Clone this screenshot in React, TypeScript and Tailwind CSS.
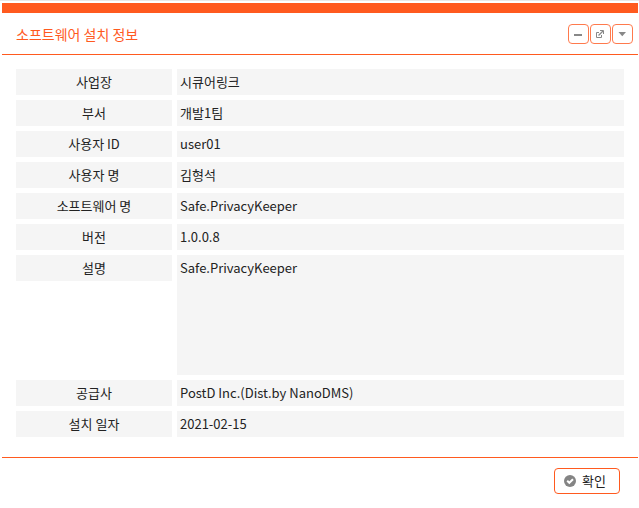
import React from "react";

type Field = { label: string; value: string; tall?: boolean };

const fields: Field[] = [
  { label: "사업장", value: "시큐어링크" },
  { label: "부서", value: "개발1팀" },
  { label: "사용자 ID", value: "user01" },
  { label: "사용자 명", value: "김형석" },
  { label: "소프트웨어 명", value: "Safe.PrivacyKeeper" },
  { label: "버전", value: "1.0.0.8" },
  { label: "설명", value: "Safe.PrivacyKeeper", tall: true },
  { label: "공급사", value: "PostD Inc.(Dist.by NanoDMS)" },
  { label: "설치 일자", value: "2021-02-15" },
];

function ToolButton({ label, children }: { label: string; children: React.ReactNode }) {
  return (
    <button
      type="button"
      aria-label={label}
      className="flex h-5 w-[21px] items-center rounded border border-[#ff7a4d] bg-white pl-[5px] text-[#888888]"
    >
      {children}
    </button>
  );
}

function MinimizeIcon() {
  return (
    <svg width="8" height="8" viewBox="0 0 8 8" shapeRendering="crispEdges" aria-hidden="true">
      <rect x="0" y="4" width="8" height="2" fill="currentColor" />
    </svg>
  );
}

function PopOutIcon() {
  return (
    <svg width="8" height="8" viewBox="0 0 8 8" fill="none" stroke="currentColor" aria-hidden="true">
      <path d="M3 2.5H.5V7.5H5.5V5" />
      <path d="M2.5 5.5L7 1" strokeWidth="1.2" />
      <path d="M4 .5H7.5V4" />
    </svg>
  );
}

function CaretIcon() {
  return (
    <svg width="8" height="8" viewBox="0 0 8 8" aria-hidden="true">
      <path d="M.5 2H8L4.25 6.3Z" fill="currentColor" />
    </svg>
  );
}

function CheckIcon() {
  return (
    <svg width="12" height="12" viewBox="0 0 12 12" fill="none" aria-hidden="true">
      <circle cx="6" cy="6" r="6" fill="#848484" />
      <path d="M3.2 5.8L5.3 7.8L9 4.2" stroke="white" strokeWidth="2" />
    </svg>
  );
}

export default function App() {
  return (
    <main className="border-t border-[#e8e8e8] bg-white pt-0.5 font-['Noto_Sans_CJK_KR',sans-serif] text-[13px] leading-[26px] text-[#222222]">
      <div className="mr-px ml-0.5">
        <header className="flex items-start justify-between border-t-10 border-b border-[#ff5a1f] pt-[11px] pr-[5px] pb-[9px] pl-3.5">
          <h1 className="text-sm leading-[21px] text-[#ff5a1f]">소프트웨어 설치 정보</h1>
          <div className="flex gap-px">
            <ToolButton label="최소화">
              <MinimizeIcon />
            </ToolButton>
            <ToolButton label="새 창">
              <PopOutIcon />
            </ToolButton>
            <ToolButton label="메뉴">
              <CaretIcon />
            </ToolButton>
          </div>
        </header>

        <dl className="flex flex-col gap-[5px] pt-3.5 pr-3.5 pb-5 pl-3.5">
          {fields.map((field) => (
            <div key={field.label} className="flex items-start gap-[5px]">
              <dt className="w-[156px] shrink-0 bg-[#f5f5f5] text-center">{field.label}</dt>
              <dd className={`grow bg-[#f5f5f5] px-[3px] ${field.tall ? "min-h-[120px]" : ""}`}>
                {field.value}
              </dd>
            </div>
          ))}
        </dl>

        <footer className="flex justify-end border-t border-[#ff5a1f] py-2.5 pr-[18px]">
          <button
            type="button"
            className="flex h-[26px] w-[66px] items-center gap-1.5 rounded border border-[#ff5a1f] bg-white pl-[9px]"
          >
            <CheckIcon />
            확인
          </button>
        </footer>
      </div>
    </main>
  );
}
